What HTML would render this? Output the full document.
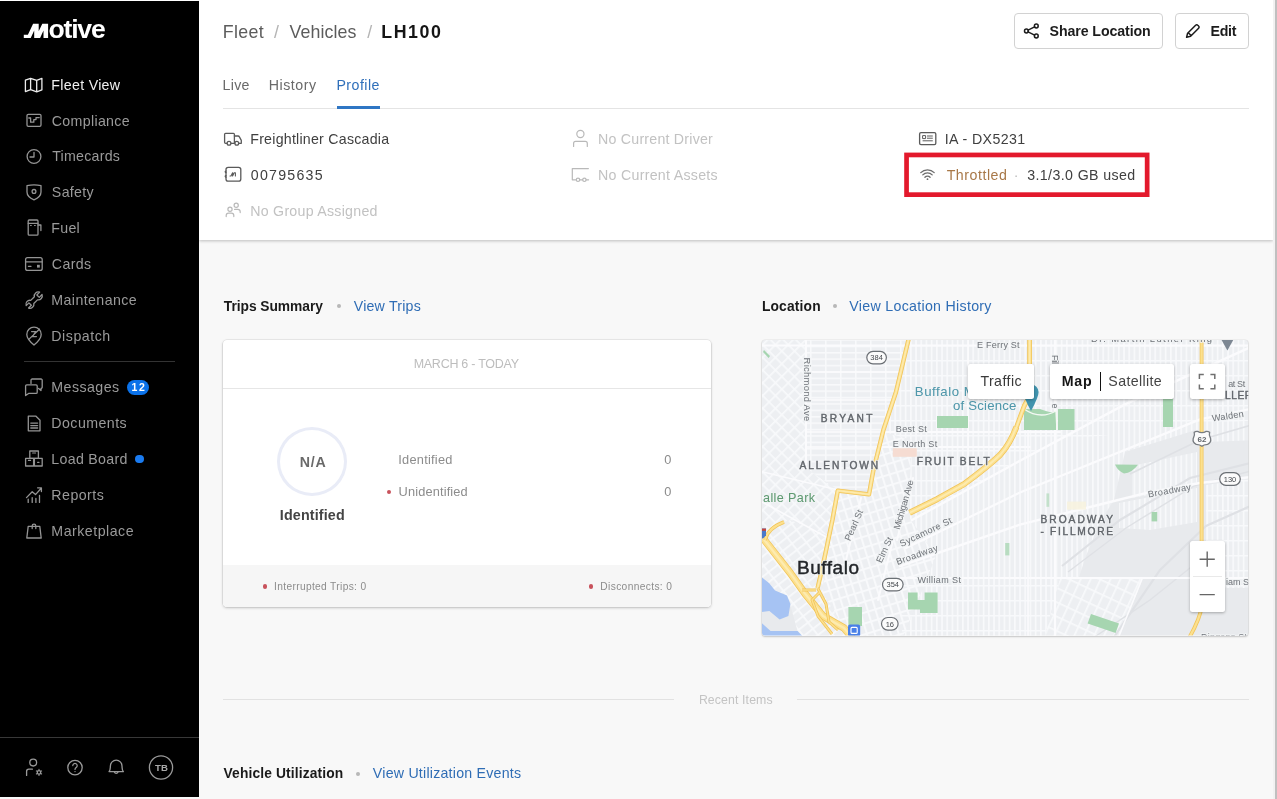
<!DOCTYPE html>
<html><head><meta charset="utf-8"><title>Motive - LH100</title>
<style>
html,body{margin:0;padding:0;}
body{width:1277px;height:799px;position:relative;overflow:hidden;background:#f8f8f8;font-family:"Liberation Sans",sans-serif;}
.t{position:absolute;white-space:nowrap;font-family:"Liberation Sans",sans-serif;}
.abs{position:absolute;}
svg{position:absolute;overflow:visible;}
#root{position:absolute;left:0;top:0;width:1277px;height:799px;overflow:hidden;will-change:transform;}

</style></head>
<body>
<div id="root">
<div class="abs" style="left:0;top:0;width:1277px;height:1px;background:#fff"></div>
<div class="abs" id="sb" style="left:0;top:1px;width:199px;height:796px;background:#000"></div>
<svg style="left:0;top:0" width="199" height="60"><path fill="#fff" d="M23.8 37.9 L23.8 34.7 L27.9 34.7 L33.1 23.7 L38.7 23.7 L38.7 31.2 L42.3 23.7 L48.1 23.7 L48.1 37.9 L43.5 37.9 L43.5 30.6 L40.1 37.9 L34.2 37.9 L34.2 30.6 L30.7 37.9 Z"/></svg>
<span class="t" id="logo" style="left:48.4px;top:16px;font-size:26.6px;line-height:26.6px;font-weight:700;color:#fff;letter-spacing:-1.18px">otive</span>
<span class="t" style="left:51.34px;top:78.00px;font-size:14.2px;line-height:14.2px;color:#f0f0f0;letter-spacing:0.304px;">Fleet View</span>
<span class="t" style="left:51.78px;top:114.00px;font-size:14.2px;line-height:14.2px;color:#9a9a9a;letter-spacing:0.330px;">Compliance</span>
<span class="t" style="left:52.18px;top:149.00px;font-size:14.2px;line-height:14.2px;color:#9a9a9a;letter-spacing:0.257px;">Timecards</span>
<span class="t" style="left:51.86px;top:185.00px;font-size:14.2px;line-height:14.2px;color:#9a9a9a;letter-spacing:0.323px;">Safety</span>
<span class="t" style="left:51.34px;top:221.00px;font-size:14.2px;line-height:14.2px;color:#9a9a9a;letter-spacing:0.264px;">Fuel</span>
<span class="t" style="left:51.78px;top:257.00px;font-size:14.2px;line-height:14.2px;color:#9a9a9a;letter-spacing:0.364px;">Cards</span>
<span class="t" style="left:51.34px;top:293.00px;font-size:14.2px;line-height:14.2px;color:#9a9a9a;letter-spacing:0.409px;">Maintenance</span>
<span class="t" style="left:51.34px;top:329.00px;font-size:14.2px;line-height:14.2px;color:#9a9a9a;letter-spacing:0.520px;">Dispatch</span>
<span class="t" style="left:51.34px;top:380.00px;font-size:14.2px;line-height:14.2px;color:#9a9a9a;letter-spacing:0.437px;">Messages</span>
<span class="t" style="left:51.34px;top:416.00px;font-size:14.2px;line-height:14.2px;color:#9a9a9a;letter-spacing:0.445px;">Documents</span>
<span class="t" style="left:51.34px;top:452.00px;font-size:14.2px;line-height:14.2px;color:#9a9a9a;letter-spacing:0.295px;">Load Board</span>
<span class="t" style="left:51.34px;top:488.00px;font-size:14.2px;line-height:14.2px;color:#9a9a9a;letter-spacing:0.460px;">Reports</span>
<span class="t" style="left:51.34px;top:524.00px;font-size:14.2px;line-height:14.2px;color:#9a9a9a;letter-spacing:0.495px;">Marketplace</span>
<div class="abs" style="left:24px;top:361px;width:151px;height:1px;background:#333"></div>
<div class="abs" style="left:0;top:737px;width:199px;height:1px;background:#383838"></div>
<div class="abs" style="left:127px;top:380px;width:22.4px;height:15px;border-radius:7.5px;background:#0b72ea"></div>
<span class="t" style="left:131.54px;top:382.00px;font-size:10.5px;line-height:10.5px;color:#fff;font-weight:700;letter-spacing:1.603px;">12</span>
<div class="abs" style="left:134.8px;top:454.6px;width:8.8px;height:8.8px;border-radius:50%;background:#1a7bf0"></div>
<svg style="left:0;top:0" width="199" height="799"><g fill="none" stroke="#ececec" stroke-width="1.3" stroke-linejoin="round" stroke-linecap="round"><path d="M25.4 80.2 L30.6 78.3 L36.7 80.4 L41.9 78.3 L41.9 89.8 L36.7 91.8 L30.6 89.7 L25.4 91.6 Z M30.6 78.3 V89.7 M36.7 80.4 V91.8"/></g><g fill="none" stroke="#949494" stroke-width="1.3" stroke-linejoin="round" stroke-linecap="round"><rect x="27" y="114.3" width="14" height="12" rx="1.3"/><path d="M28.8 118 h1.8 v4.2 h3.2 v-2.6 h2.2 v-2 h3.2"/></g><g fill="none" stroke="#949494" stroke-width="1.3" stroke-linejoin="round" stroke-linecap="round"><circle cx="34" cy="156.5" r="6.9"/><path d="M34 152.3 V157 H30"/></g><g fill="none" stroke="#949494" stroke-width="1.3" stroke-linejoin="round" stroke-linecap="round"><path d="M27 185.6 Q34 184.2 41 185.6 V192 Q41 197 34 199.8 Q27 197 27 192 Z"/><circle cx="34" cy="191.4" r="1.9"/></g><g fill="none" stroke="#949494" stroke-width="1.3" stroke-linejoin="round" stroke-linecap="round"><rect x="28.2" y="220" width="9.8" height="15.2" rx="1"/><path d="M28.2 223.3 H38 M38 225 H40.9 V230.5"/><path d="M30.5 225.5 h0.8 M34.5 225.5 h0.8" stroke-width="1"/></g><g fill="none" stroke="#949494" stroke-width="1.3" stroke-linejoin="round" stroke-linecap="round"><rect x="25.6" y="257.6" width="16.6" height="12.8" rx="2"/><path d="M25.6 261.9 H42.2 M28.4 266.3 H31"/><rect x="37" y="264.8" width="2.8" height="2.8" fill="#949494" stroke="none"/></g><g fill="none" stroke="#949494" stroke-width="1.3" stroke-linejoin="round" stroke-linecap="round"><g transform="translate(34.1 300.1) rotate(-45)"><path d="M-2.56 -2.2 H2.56 A4 4 0 0 1 9.53 -1.7 L5.6 -1.7 V1.7 L9.53 1.7 A4 4 0 0 1 2.56 2.2 H-2.56 A4 4 0 0 1 -9.53 1.7 L-5.6 1.7 V-1.7 L-9.53 -1.7 A4 4 0 0 1 -2.56 -2.2 Z"/></g></g><g fill="none" stroke="#949494" stroke-width="1.3" stroke-linejoin="round" stroke-linecap="round"><path d="M34 345 C30 341.6 26.8 338.6 26.8 334.4 a7.2 7.2 0 0 1 14.4 0 C41.2 338.6 38 341.6 34 345 Z"/><path d="M28.8 339.4 L39.4 329.2 M31.6 331.6 h4.2 l-3.4 5 h4"/></g><g fill="none" stroke="#949494" stroke-width="1.3" stroke-linejoin="round" stroke-linecap="round"><path d="M31 383.4 V380.2 a1.2 1.2 0 0 1 1.2 -1.2 H41 a1.2 1.2 0 0 1 1.2 1.2 V387.2 a1.2 1.2 0 0 1 -1.2 1.2 V390.6 L38.6 388.4"/><path d="M26.8 384.9 H36 a1.2 1.2 0 0 1 1.2 1.2 V392.2 a1.2 1.2 0 0 1 -1.2 1.2 H28.6 L25.6 395.6 V386.1 a1.2 1.2 0 0 1 1.2 -1.2 Z"/></g><g fill="none" stroke="#949494" stroke-width="1.3" stroke-linejoin="round" stroke-linecap="round"><path d="M28.3 416.2 H36 L40 420.2 V430.8 H28.3 Z"/><path d="M30.8 423.1 H37.6 M30.8 425.6 H37.6 M30.8 428 H37.6"/></g><g fill="none" stroke="#949494" stroke-width="1.3" stroke-linejoin="round" stroke-linecap="round"><rect x="29.8" y="451" width="8.6" height="7.4"/><rect x="25.6" y="458.4" width="8" height="7.6"/><rect x="34.4" y="458.4" width="7.8" height="7.6"/><path d="M32.6 453 h3 M28.4 460.4 h2.2 M37.6 462.4 h1.4" stroke-width="1.1"/></g><g fill="none" stroke="#949494" stroke-width="1.3" stroke-linejoin="round" stroke-linecap="round"><path d="M26.5 497.6 L32.2 491.8 L35.5 494.6 L41.2 488.2 M37.6 487.8 H41.4 V491.6"/><path d="M28.2 499.2 V502.4 M32.2 497.6 V502.4 M35.9 498.4 V502.4 M39.5 495.4 V502.4"/></g><g fill="none" stroke="#949494" stroke-width="1.3" stroke-linejoin="round" stroke-linecap="round"><path d="M28.2 526.4 H39.8 L41.2 538 H26.8 Z"/><path d="M32.2 528.6 V526 a1.8 1.8 0 0 1 3.6 0 V528.6"/></g><g fill="none" stroke="#9a9a9a" stroke-width="1.3" stroke-linejoin="round" stroke-linecap="round"><circle cx="33.2" cy="762.6" r="3.4"/><path d="M26.6 775.4 V771.4 a2.2 2.2 0 0 1 2.2 -2.2 H32.4"/><circle cx="39" cy="772.4" r="1.7"/><path d="M39 769.4 v0.8 M39 774.6 v0.8 M36.4 770.9 l0.7 0.4 M40.9 773.5 l0.7 0.4 M36.4 773.9 l0.7 -0.4 M40.9 771.3 l0.7 -0.4" stroke-width="1.1"/></g><g fill="none" stroke="#9a9a9a" stroke-width="1.3" stroke-linejoin="round" stroke-linecap="round"><circle cx="75" cy="767.6" r="7.2"/><path d="M72.8 765.6 a2.2 2.2 0 1 1 3.4 1.9 c-0.9 0.6 -1.2 1 -1.2 1.9" stroke-width="1.2"/><circle cx="75" cy="771.6" r="0.7" fill="#9a9a9a" stroke="none"/></g><g fill="none" stroke="#9a9a9a" stroke-width="1.3" stroke-linejoin="round" stroke-linecap="round"><path d="M109 771.6 C110.6 770 110.2 768 110.4 766 a5.8 5.8 0 0 1 11.6 0 C122.2 768 121.8 770 123.4 771.6 Z"/><path d="M114.4 772 a1.9 1.9 0 0 0 3.6 0"/></g><g fill="none" stroke="#9a9a9a" stroke-width="1.3" stroke-linejoin="round" stroke-linecap="round"><circle cx="161" cy="767.5" r="11.6"/></g></svg>
<span class="t" style="left:154.89px;top:763.00px;font-size:9.6px;line-height:9.6px;color:#a8a8a8;font-weight:700;letter-spacing:0.147px;">TB</span>
<div class="abs" style="left:199px;top:0;width:1074px;height:240px;background:#fff;box-shadow:0 1px 3px rgba(0,0,0,0.24)"></div>
<div class="abs" style="left:1273px;top:0;width:2px;height:799px;background:#f2f2f2"></div>
<div class="abs" style="left:1275px;top:0;width:2px;height:799px;background:#c0c0c0"></div>
<span class="t" style="left:222.74px;top:24.00px;font-size:17.8px;line-height:17.8px;color:#5c5c5c;letter-spacing:0.330px;">Fleet</span>
<span class="t" style="left:273.90px;top:24.00px;font-size:17.8px;line-height:17.8px;color:#b4b4b4;">/</span>
<span class="t" style="left:289.52px;top:24.00px;font-size:17.8px;line-height:17.8px;color:#5c5c5c;letter-spacing:0.092px;">Vehicles</span>
<span class="t" style="left:367.20px;top:24.00px;font-size:17.8px;line-height:17.8px;color:#b4b4b4;">/</span>
<span class="t" style="left:381.21px;top:24.00px;font-size:17.8px;line-height:17.8px;color:#151515;font-weight:700;letter-spacing:1.599px;">LH100</span>
<span class="t" style="left:222.44px;top:78.00px;font-size:14.2px;line-height:14.2px;color:#6a6a6a;letter-spacing:0.349px;">Live</span>
<span class="t" style="left:268.84px;top:78.00px;font-size:14.2px;line-height:14.2px;color:#6a6a6a;letter-spacing:0.502px;">History</span>
<span class="t" style="left:336.44px;top:78.00px;font-size:14.2px;line-height:14.2px;color:#2f6fba;letter-spacing:0.458px;">Profile</span>
<div class="abs" style="left:223px;top:107.5px;width:1026px;height:1px;background:#e4e4e4"></div>
<div class="abs" style="left:337px;top:106px;width:43px;height:2.5px;background:#2f76c4"></div>
<div class="abs" style="left:1014px;top:13px;width:146.5px;height:34px;border:1px solid #d2d2d2;border-radius:4px;background:#fff"></div>
<div class="abs" style="left:1175px;top:13px;width:72px;height:34px;border:1px solid #d2d2d2;border-radius:4px;background:#fff"></div>
<span class="t" style="left:1049.59px;top:24.00px;font-size:14.2px;line-height:14.2px;color:#1c1c1c;font-weight:700;letter-spacing:-0.099px;">Share Location</span>
<span class="t" style="left:1210.45px;top:24.00px;font-size:14.2px;line-height:14.2px;color:#1c1c1c;font-weight:700;letter-spacing:-0.232px;">Edit</span>
<svg style="left:0;top:0" width="1277" height="250"><g fill="none" stroke="#1c1c1c" stroke-width="1.5" stroke-linejoin="round" stroke-linecap="round"><circle cx="1036.3" cy="26" r="1.9" fill="#fff"/><circle cx="1026.4" cy="31" r="1.9" fill="#fff"/><circle cx="1036.3" cy="36" r="1.9" fill="#fff"/><path d="M1028.1 30.1 L1034.6 26.9 M1028.1 31.9 L1034.6 35.1"/></g><g fill="none" stroke="#1c1c1c" stroke-width="1.5" stroke-linejoin="round" stroke-linecap="round"><path d="M1186.6 37.2 L1187.6 33.2 L1195.6 25.2 a1.5 1.5 0 0 1 2.2 0 l0.8 0.8 a1.5 1.5 0 0 1 0 2.2 L1190.6 36.2 Z M1188.3 32.7 L1191.1 35.5" /></g><g fill="none" stroke="#5a5a5a" stroke-width="1.3" stroke-linejoin="round" stroke-linecap="round"><path d="M226.9 143.3 H225.6 a1 1 0 0 1 -1 -1 V134.3 a1 1 0 0 1 1 -1 H233.4 a1 1 0 0 1 1 1 V143.3 H231.2"/><path d="M234.4 136 H238 a1.6 1.6 0 0 1 1.4 0.9 L241.3 140.4 V143.3 H238.9 M234.6 143.3 h0"/><circle cx="229" cy="143.3" r="1.9"/><circle cx="236.8" cy="143.3" r="1.9"/></g><g fill="none" stroke="#5a5a5a" stroke-width="1.3" stroke-linejoin="round" stroke-linecap="round"><rect x="226" y="167.4" width="14.8" height="13.8" rx="2.2"/><path d="M226 171 q-1.6 0.6 0 1.6 M226 175.6 q-1.6 0.6 0 1.6"/><path d="M230 176 h1 l1.6 -3.2 v3.2 l1.6 -3.2 h1.2 v3.2" stroke-width="1.1"/></g><g fill="none" stroke="#b9b9b9" stroke-width="1.2" stroke-linejoin="round" stroke-linecap="round"><circle cx="230" cy="209.2" r="2.1"/><path d="M226.2 216.6 V215.6 a2.4 2.4 0 0 1 2.4 -2.4 h2.8 a2.4 2.4 0 0 1 2.4 2.4 V216.6"/><circle cx="236.2" cy="205.3" r="2.1"/><path d="M234.6 209.4 h3.2 a2.4 2.4 0 0 1 2.4 2.4 V212.6"/></g><g fill="none" stroke="#b9b9b9" stroke-width="1.2" stroke-linejoin="round" stroke-linecap="round"><circle cx="580.4" cy="134" r="3.6"/><path d="M573.6 146.4 V143.4 a2 2 0 0 1 2 -2 H585.3 a2 2 0 0 1 2 2 V146.4"/></g><g fill="none" stroke="#b9b9b9" stroke-width="1.2" stroke-linejoin="round" stroke-linecap="round"><path d="M588.4 168.6 H572.3 V179.8 H576.2 M579.8 179.8 H582.6 M586.2 179.8 H588.6"/><circle cx="578" cy="179.8" r="1.7"/><circle cx="584.4" cy="179.8" r="1.7"/></g><g fill="none" stroke="#5a5a5a" stroke-width="1.3" stroke-linejoin="round" stroke-linecap="round"><rect x="919.6" y="132.6" width="16.2" height="12" rx="1.4"/><path d="M927.4 136 H932.4 M927.4 138.2 H932.4 M923 140.8 H932.4" stroke-width="1"/><rect x="923" y="135.6" width="2.6" height="3" stroke-width="1"/></g><g fill="none" stroke="#6c6c6c" stroke-width="1.3" stroke-linejoin="round" stroke-linecap="round"><path d="M920.8 172.6 a9.4 9.4 0 0 1 13.4 0 M922.8 174.9 a6.5 6.5 0 0 1 9.4 0 M924.9 177.2 a3.6 3.6 0 0 1 5.2 0"/><circle cx="927.5" cy="179.2" r="0.9" fill="#6c6c6c" stroke="none"/></g></svg>
<span class="t" style="left:250.24px;top:132.00px;font-size:14.2px;line-height:14.2px;color:#404040;letter-spacing:0.240px;">Freightliner Cascadia</span>
<span class="t" style="left:250.85px;top:168.00px;font-size:14.2px;line-height:14.2px;color:#404040;letter-spacing:1.225px;">00795635</span>
<span class="t" style="left:250.24px;top:204.00px;font-size:14.2px;line-height:14.2px;color:#c2c2c2;letter-spacing:0.260px;">No Group Assigned</span>
<span class="t" style="left:598.04px;top:132.00px;font-size:14.2px;line-height:14.2px;color:#c2c2c2;letter-spacing:0.228px;">No Current Driver</span>
<span class="t" style="left:598.04px;top:168.00px;font-size:14.2px;line-height:14.2px;color:#c2c2c2;letter-spacing:0.279px;">No Current Assets</span>
<span class="t" style="left:944.69px;top:132.00px;font-size:14.2px;line-height:14.2px;color:#404040;letter-spacing:0.395px;">IA - DX5231</span>
<span class="t" style="left:946.68px;top:168.00px;font-size:14.2px;line-height:14.2px;color:#a87848;letter-spacing:0.525px;">Throttled</span>
<span class="t" style="left:1013.82px;top:168.00px;font-size:14.2px;line-height:14.2px;color:#bbb;">·</span>
<span class="t" style="left:1027.26px;top:168.00px;font-size:14.2px;line-height:14.2px;color:#404040;letter-spacing:0.381px;">3.1/3.0 GB used</span>
<svg style="left:0;top:0" width="1277" height="250"><rect x="906.55" y="154.95" width="240.6" height="39.7" fill="none" stroke="#e3192c" stroke-width="4.7"/></svg>
<span class="t" style="left:223.85px;top:300.00px;font-size:13.8px;line-height:13.8px;color:#1a1a1a;font-weight:700;letter-spacing:-0.053px;">Trips Summary</span>
<div class="abs" style="left:336.6px;top:304px;width:4px;height:4px;border-radius:50%;background:#b8b8b8"></div>
<span class="t" style="left:353.74px;top:299.00px;font-size:14.2px;line-height:14.2px;color:#2f6db5;letter-spacing:0.211px;">View Trips</span>
<span class="t" style="left:761.88px;top:300.00px;font-size:13.8px;line-height:13.8px;color:#1a1a1a;font-weight:700;letter-spacing:0.183px;">Location</span>
<div class="abs" style="left:832.6px;top:304px;width:4px;height:4px;border-radius:50%;background:#b8b8b8"></div>
<span class="t" style="left:849.34px;top:299.00px;font-size:14.2px;line-height:14.2px;color:#2f6db5;letter-spacing:0.298px;">View Location History</span>
<div class="abs" style="left:223px;top:340px;width:488px;height:267px;background:#fff;border-radius:4px;box-shadow:0 0 0 0.6px rgba(0,0,0,0.10),0 1px 3px rgba(0,0,0,0.20)"></div>
<div class="abs" style="left:223px;top:387.5px;width:488px;height:1px;background:#e6e6e6"></div>
<div class="abs" style="left:223px;top:564.5px;width:488px;height:42.5px;background:#f6f6f6;border-radius:0 0 4px 4px"></div>
<span class="t" style="left:413.67px;top:358.00px;font-size:12.5px;line-height:12.5px;color:#bdbdbd;letter-spacing:-0.266px;">MARCH 6 - TODAY</span>
<div class="abs" style="left:277.3px;top:426.6px;width:63.8px;height:63px;border:3px solid #e9ecf7;border-radius:50%"></div>
<span class="t" style="left:299.65px;top:455.00px;font-size:14.2px;line-height:14.2px;color:#6a6a6a;font-weight:700;letter-spacing:0.835px;">N/A</span>
<span class="t" style="left:279.84px;top:508.00px;font-size:14.3px;line-height:14.3px;color:#444;font-weight:700;letter-spacing:0.138px;">Identified</span>
<span class="t" style="left:398.22px;top:454.00px;font-size:12.8px;line-height:12.8px;color:#8c8c8c;letter-spacing:0.251px;">Identified</span>
<span class="t" style="left:398.61px;top:486.00px;font-size:12.8px;line-height:12.8px;color:#8c8c8c;letter-spacing:0.137px;">Unidentified</span>
<span class="t" style="left:664.30px;top:454.00px;font-size:12.8px;line-height:12.8px;color:#8c8c8c;">0</span>
<span class="t" style="left:664.30px;top:486.00px;font-size:12.8px;line-height:12.8px;color:#8c8c8c;">0</span>
<div class="abs" style="left:386.9px;top:489.7px;width:4.3px;height:4.3px;border-radius:50%;background:#c8525c"></div>
<div class="abs" style="left:262.5px;top:584.3px;width:4.4px;height:4.4px;border-radius:50%;background:#c8525c"></div>
<div class="abs" style="left:588.5px;top:584.3px;width:4.4px;height:4.4px;border-radius:50%;background:#c8525c"></div>
<span class="t" style="left:274.06px;top:582.00px;font-size:10.2px;line-height:10.2px;color:#8c8c8c;letter-spacing:0.346px;">Interrupted Trips: 0</span>
<span class="t" style="left:600.36px;top:582.00px;font-size:10.2px;line-height:10.2px;color:#8c8c8c;letter-spacing:0.364px;">Disconnects: 0</span>
<div class="abs" style="left:223px;top:699px;width:451px;height:1px;background:#e2e2e2"></div>
<div class="abs" style="left:797.3px;top:699px;width:451.7px;height:1px;background:#e2e2e2"></div>
<span class="t" style="left:698.89px;top:694.00px;font-size:12.3px;line-height:12.3px;color:#c4c4c4;letter-spacing:0.118px;">Recent Items</span>
<span class="t" style="left:223.51px;top:767.00px;font-size:13.8px;line-height:13.8px;color:#1a1a1a;font-weight:700;letter-spacing:0.131px;">Vehicle Utilization</span>
<div class="abs" style="left:356.2px;top:771.6px;width:4px;height:4px;border-radius:50%;background:#b8b8b8"></div>
<span class="t" style="left:372.84px;top:766.00px;font-size:14.2px;line-height:14.2px;color:#2f6db5;letter-spacing:0.225px;">View Utilization Events</span>
<svg id="map" style="left:0;top:0" width="1277" height="799"><defs><clipPath id="mc"><rect x="762" y="340" width="486.3" height="295.6" rx="3"/></clipPath>
<pattern id="pe" width="5.2" height="24" patternUnits="userSpaceOnUse"><rect width="5.2" height="24" fill="#edeff2"/><rect x="0" y="0" width="1.7" height="24" fill="#f8f9fb"/></pattern>
<pattern id="peh" width="5.2" height="15" patternUnits="userSpaceOnUse"><rect x="0" y="0" width="5.2" height="1.5" fill="#f8f9fb"/></pattern>
<pattern id="pnw" width="15" height="6.4" patternUnits="userSpaceOnUse"><rect width="15" height="6.4" fill="#edeff2"/><rect x="0" y="0" width="15" height="1.6" fill="#f8f9fb"/><rect x="0" y="0" width="1.6" height="6.4" fill="#f8f9fb"/></pattern>
<pattern id="pd" width="9" height="9" patternUnits="userSpaceOnUse" patternTransform="rotate(45 762 340)"><rect width="9" height="9" fill="#edeff2"/><rect x="0" y="0" width="1.7" height="9" fill="#f8f9fb"/><rect x="0" y="0" width="9" height="1.7" fill="#f8f9fb"/></pattern>
<pattern id="pdt" width="7.6" height="10.4" patternUnits="userSpaceOnUse" patternTransform="rotate(-17 850 560)"><rect width="7.6" height="10.4" fill="#edeff2"/><rect x="0" y="0" width="2" height="10.4" fill="#f8f9fb"/><rect x="0" y="0" width="7.6" height="2" fill="#f8f9fb"/></pattern>
<pattern id="pwf" width="8" height="12" patternUnits="userSpaceOnUse" patternTransform="rotate(52 790 572)"><rect width="8" height="12" fill="#edeff2"/><rect x="0" y="0" width="1.8" height="12" fill="#f8f9fb"/><rect x="0" y="0" width="8" height="1.8" fill="#f8f9fb"/></pattern>
<pattern id="plr" width="9" height="13" patternUnits="userSpaceOnUse" patternTransform="rotate(25 1080 600)"><rect width="9" height="13" fill="#edeff2"/><rect x="0" y="0" width="1.7" height="13" fill="#f8f9fb"/><rect x="0" y="0" width="9" height="1.7" fill="#f8f9fb"/></pattern>
<pattern id="pfb" width="6" height="11" patternUnits="userSpaceOnUse" patternTransform="rotate(-3 900 450)"><rect width="6" height="11" fill="#edeff2"/><rect x="0" y="0" width="1.8" height="11" fill="#f8f9fb"/><rect x="0" y="0" width="6" height="1.6" fill="#f8f9fb"/></pattern>
<filter id="mb" x="-2%" y="-2%" width="104%" height="104%"><feGaussianBlur stdDeviation="0.55"/></filter></defs>
<g clip-path="url(#mc)"><g filter="url(#mb)">
<rect x="755" y="335" width="500" height="306" fill="#e8eaed"/>
<polygon points="755,335 806,335 806,468 838,490 828,536 790,520 755,536" fill="url(#pd)"/>
<polygon points="806,335 909,335 884,430 872,490 838,490 806,468" fill="url(#pnw)"/>
<polygon points="838,491 870,495 884,432 912,440 908,516 936,556 902,640 852,640 822,592 830,536" fill="url(#pdt)"/>
<polygon points="755,536 790,520 830,536 822,592 852,640 800,640 790,604 775,590 762,577 755,572" fill="url(#pwf)"/>
<polygon points="909,335 1255,335 1255,440 1205,442 1196,430 1125,452 1114,500 1100,522 1086,556 1078,580 1000,580 1000,640 902,640 936,556 908,516 912,440 884,432" fill="url(#pe)"/>
<polygon points="909,335 1255,335 1255,420 1060,440 1000,470 912,520 908,516 912,440 884,432" fill="url(#peh)"/>
<polygon points="1132,466 1197,452 1197,486 1132,498" fill="url(#pe)"/>
<polygon points="1119,503 1197,488 1197,522 1150,530 1119,528" fill="url(#pe)"/>
<polygon points="1206,485 1255,478 1255,588 1206,588" fill="url(#pe)"/>
<polygon points="1206,485 1255,478 1255,588 1206,588" fill="url(#peh)"/>
<polygon points="1000,578 1060,578 1044,640 1000,640" fill="url(#pe)"/>
<polygon points="1000,578 1060,578 1044,640 1000,640" fill="url(#peh)"/>
<polygon points="1060,578 1143,578 1118,640 1044,640" fill="url(#plr)"/>
<polygon points="902,579 1000,579 1000,640 902,640" fill="url(#peh)"/>
<path d="M1062 566 L1120 520 L1190 478 L1255 462" stroke="#dfe1e5" stroke-width="2.2" fill="none"/>
<path d="M1068 572 L1126 528 L1194 486 L1255 470" stroke="#dfe1e5" stroke-width="1.4" fill="none"/>
<path d="M1112 640 L1160 570 L1206 526 L1255 504" stroke="#dfe1e5" stroke-width="2.2" fill="none"/>
<path d="M1130 474 L1200 440 L1255 424" stroke="#dfe1e5" stroke-width="1.6" fill="none"/>
<path d="M1090 640 L1150 600 L1200 560" stroke="#dfe1e5" stroke-width="1.4" fill="none"/>
<path d="M755 345.5 H1255" stroke="#fbfbfd" stroke-width="1.8" fill="none" stroke-linecap="round"/>
<path d="M884 432 H1060" stroke="#fbfbfd" stroke-width="2" fill="none" stroke-linecap="round"/>
<path d="M880 447 H1030" stroke="#fbfbfd" stroke-width="1.8" fill="none" stroke-linecap="round"/>
<path d="M806 335 V468" stroke="#fbfbfd" stroke-width="2" fill="none" stroke-linecap="round"/>
<path d="M900 578 H1255" stroke="#fbfbfd" stroke-width="2.2" fill="none" stroke-linecap="round"/>
<path d="M1055 335 V640" stroke="#fbfbfd" stroke-width="2.2" fill="none" stroke-linecap="round"/>
<path d="M1028 430 V640" stroke="#fbfbfd" stroke-width="1.6" fill="none" stroke-linecap="round"/>
<path d="M968 335 V520" stroke="#fbfbfd" stroke-width="1.6" fill="none" stroke-linecap="round"/>
<path d="M912 520 L1020 460.8 L1125 404.4 L1255 345" stroke="#fbfbfd" stroke-width="2.4" fill="none" stroke-linecap="round"/>
<path d="M906 548 L1020 492.6 L1200 419.4 L1255 408" stroke="#fbfbfd" stroke-width="2.2" fill="none" stroke-linecap="round"/>
<path d="M900 566 L1020 524.6 L1110 502 L1147.6 492.6 L1198.4 483.2 L1255 476.6" stroke="#fbfbfd" stroke-width="2.4" fill="none" stroke-linecap="round"/>
<path d="M806 432 H884" stroke="#fbfbfd" stroke-width="1.6" fill="none" stroke-linecap="round"/>
<path d="M806 447 H880" stroke="#fbfbfd" stroke-width="1.4" fill="none" stroke-linecap="round"/>
<path d="M806 400 H892" stroke="#fbfbfd" stroke-width="1.4" fill="none" stroke-linecap="round"/>
<path d="M806 372 H900" stroke="#fbfbfd" stroke-width="1.4" fill="none" stroke-linecap="round"/>
<path d="M755 470 L838 490" stroke="#fbfbfd" stroke-width="1.6" fill="none" stroke-linecap="round"/>
<path d="M755 498 L828 538" stroke="#fbfbfd" stroke-width="1.6" fill="none" stroke-linecap="round"/>
<path d="M1119 636 L1142 579" stroke="#fbfbfd" stroke-width="1.6" fill="none" stroke-linecap="round"/>
<path d="M861 498 L846 560" stroke="#fbfbfd" stroke-width="2" fill="none" stroke-linecap="round"/>
<path d="M893 540 L878 600" stroke="#fbfbfd" stroke-width="2" fill="none" stroke-linecap="round"/>
<path d="M913 478 L897 540" stroke="#fbfbfd" stroke-width="2" fill="none" stroke-linecap="round"/>
<rect x="937" y="416" width="31" height="12" fill="#a6d5b0"/>
<path d="M1024 409 L1040 409 Q1052 414 1056 411 L1056 430 L1024 430 Z" fill="#a6d5b0"/>
<rect x="1058" y="409" width="16.5" height="21" fill="#a6d5b0"/>
<rect x="1163" y="396" width="10" height="31" fill="#a6d5b0"/>
<path d="M1115 464.4 L1138 464.8 Q1132 473 1124 473.4 Q1118 471 1115 464.4 Z" fill="#a6d5b0"/>
<rect x="1151.6" y="512" width="5.6" height="9.4" fill="#a6d5b0"/>
<rect x="1005.2" y="543" width="4.2" height="12.4" fill="#a6d5b0" opacity="0.75"/>
<rect x="1046.4" y="493.4" width="2.8" height="13.4" fill="#a6d5b0" opacity="0.6"/>
<path d="M908 592.4 L917.6 592.4 L917.6 600 L924.6 600 L924.6 592.4 L937.6 592.4 L937.6 613 L920 613 L920 609.6 L908 609.6 Z" fill="#a6d5b0"/>
<rect x="848.4" y="607" width="13.6" height="19" fill="#a6d5b0"/>
<polygon points="1091,614 1119,623.4 1115.6,633 1087.6,623.6" fill="#a6d5b0"/>
<polygon points="764,350 770,356 768.6,358 763,352" fill="#a6d5b0"/>
<rect x="1067" y="501.6" width="19" height="8" fill="#f7f3dc" opacity="0.8"/>
<rect x="892.8" y="448.2" width="24" height="8.6" fill="#f6dcd2"/>
<path d="M1024 409 Q1040 420 1056 411 M1056 411 L1057 430" stroke="#f4f8f4" stroke-width="1.4" fill="none"/>
<path d="M755 572 L769 583 L775 590.6 L787 595.4 L790.4 604 L788.4 616 L779.6 619.4 L769.4 611 L755 613 Z" fill="#a6c3f3"/>
<path d="M755 617 L770.6 631 L797.6 631 L806 640 L755 640 Z" fill="#a6c3f3"/>
<path d="M755 528 L790 572.6 L805 593.6 L823 616 L844 628 L854 640" stroke="#f1c458" stroke-width="7.4" fill="none" stroke-linejoin="round"/>
<path d="M755 528 L790 572.6 L805 593.6 L823 616 L844 628 L854 640" stroke="#fce08e" stroke-width="5.9" fill="none" stroke-linejoin="round"/>
<path d="M755 528 L790 572.6 L805 593.6 L823 616 L844 628 L854 640" stroke="#fdebb0" stroke-width="2.22" fill="none" stroke-linejoin="round"/>
<path d="M765 540 Q768 528 784 522" stroke="#f1c458" stroke-width="3.6" fill="none" stroke-linejoin="round"/>
<path d="M765 540 Q768 528 784 522" stroke="#fce08e" stroke-width="2.1" fill="none" stroke-linejoin="round"/>
<path d="M909.6 335 L896 392 L883.4 430 L873.4 470 L869 494.4 L837.8 490.6 L832.4 520 L823 565 L817.6 588" stroke="#f1c458" stroke-width="4.4" fill="none" stroke-linejoin="round"/>
<path d="M909.6 335 L896 392 L883.4 430 L873.4 470 L869 494.4 L837.8 490.6 L832.4 520 L823 565 L817.6 588" stroke="#fce08e" stroke-width="2.9000000000000004" fill="none" stroke-linejoin="round"/>
<path d="M909.6 335 L896 392 L883.4 430 L873.4 470 L869 494.4 L837.8 490.6 L832.4 520 L823 565 L817.6 588" stroke="#fdebb0" stroke-width="1.32" fill="none" stroke-linejoin="round"/>
<path d="M802 590 H816 M817.6 588 L826 604 L829 622 L838 630 M820 592 L812 600 L818 616 L832 634" stroke="#f1c458" stroke-width="3" fill="none" stroke-linejoin="round"/>
<path d="M802 590 H816 M817.6 588 L826 604 L829 622 L838 630 M820 592 L812 600 L818 616 L832 634" stroke="#fce08e" stroke-width="1.5" fill="none" stroke-linejoin="round"/>
<path d="M1029.6 335 L1029.6 396 L1024.2 406 L1015.4 430 Q1010 444 1000 455" stroke="#f1c458" stroke-width="4.8" fill="none" stroke-linejoin="round"/>
<path d="M1029.6 335 L1029.6 396 L1024.2 406 L1015.4 430 Q1010 444 1000 455" stroke="#fce08e" stroke-width="3.3" fill="none" stroke-linejoin="round"/>
<path d="M1029.6 335 L1029.6 396 L1024.2 406 L1015.4 430 Q1010 444 1000 455" stroke="#fdebb0" stroke-width="1.44" fill="none" stroke-linejoin="round"/>
<path d="M1016.4 427 Q1010 444 1000 455 Q988 466.4 964 484.2 L937 499.2 L909.6 512.8" stroke="#f1c458" stroke-width="6" fill="none" stroke-linejoin="round"/>
<path d="M1016.4 427 Q1010 444 1000 455 Q988 466.4 964 484.2 L937 499.2 L909.6 512.8" stroke="#fce08e" stroke-width="4.5" fill="none" stroke-linejoin="round"/>
<path d="M1016.4 427 Q1010 444 1000 455 Q988 466.4 964 484.2 L937 499.2 L909.6 512.8" stroke="#fdebb0" stroke-width="1.8" fill="none" stroke-linejoin="round"/>
<path d="M1201.6 335 V606 Q1200.6 618 1188 640" stroke="#f1c458" stroke-width="3.8" fill="none" stroke-linejoin="round"/>
<path d="M1201.6 335 V606 Q1200.6 618 1188 640" stroke="#fce08e" stroke-width="2.3" fill="none" stroke-linejoin="round"/>
</g>
</g></svg>
<div class="abs" style="left:762px;top:340px;width:486.3px;height:295.6px;border-radius:3px;box-shadow:0 0 0 0.6px rgba(0,0,0,0.08),0 1px 2px rgba(0,0,0,0.18)"></div>
<svg id="maplab" style="left:0;top:0" width="1277" height="799"><g clip-path="url(#mc)"><g filter="url(#lb)"><text x="820.8" y="422.2" font-family="Liberation Sans, sans-serif" font-size="10.2" fill="#62666c" textLength="51.6" lengthAdjust="spacing" stroke="#f1f3f4" stroke-width="2.2" stroke-linejoin="round" stroke-opacity="0.85">BRYANT</text>
<text x="820.8" y="422.2" font-family="Liberation Sans, sans-serif" font-size="10.2" fill="#62666c" textLength="51.6" lengthAdjust="spacing" stroke="#62666c" stroke-width="0.4">BRYANT</text>
<text x="799.4" y="469.2" font-family="Liberation Sans, sans-serif" font-size="10.2" fill="#62666c" textLength="78.8" lengthAdjust="spacing" stroke="#f1f3f4" stroke-width="2.2" stroke-linejoin="round" stroke-opacity="0.85">ALLENTOWN</text>
<text x="799.4" y="469.2" font-family="Liberation Sans, sans-serif" font-size="10.2" fill="#62666c" textLength="78.8" lengthAdjust="spacing" stroke="#62666c" stroke-width="0.4">ALLENTOWN</text>
<text x="916.8" y="465.3" font-family="Liberation Sans, sans-serif" font-size="10.2" fill="#62666c" textLength="73" lengthAdjust="spacing" stroke="#f1f3f4" stroke-width="2.2" stroke-linejoin="round" stroke-opacity="0.85">FRUIT BELT</text>
<text x="916.8" y="465.3" font-family="Liberation Sans, sans-serif" font-size="10.2" fill="#62666c" textLength="73" lengthAdjust="spacing" stroke="#62666c" stroke-width="0.4">FRUIT BELT</text>
<text x="1040.4" y="523" font-family="Liberation Sans, sans-serif" font-size="10.2" fill="#62666c" textLength="72.6" lengthAdjust="spacing" stroke="#f1f3f4" stroke-width="2.2" stroke-linejoin="round" stroke-opacity="0.85">BROADWAY</text>
<text x="1040.4" y="523" font-family="Liberation Sans, sans-serif" font-size="10.2" fill="#62666c" textLength="72.6" lengthAdjust="spacing" stroke="#62666c" stroke-width="0.4">BROADWAY</text>
<text x="1040.4" y="535.3" font-family="Liberation Sans, sans-serif" font-size="10.2" fill="#62666c" textLength="72.6" lengthAdjust="spacing" stroke="#f1f3f4" stroke-width="2.2" stroke-linejoin="round" stroke-opacity="0.85">- FILLMORE</text>
<text x="1040.4" y="535.3" font-family="Liberation Sans, sans-serif" font-size="10.2" fill="#62666c" textLength="72.6" lengthAdjust="spacing" stroke="#62666c" stroke-width="0.4">- FILLMORE</text>
<text x="797" y="574.3" font-family="Liberation Sans, sans-serif" font-size="19" fill="#25282c" textLength="62" lengthAdjust="spacing" stroke="#f1f3f4" stroke-width="2.2" stroke-linejoin="round" stroke-opacity="0.85">Buffalo</text>
<text x="797" y="574.3" font-family="Liberation Sans, sans-serif" font-size="19" fill="#25282c" textLength="62" lengthAdjust="spacing" stroke="#25282c" stroke-width="0.4">Buffalo</text>
<text x="763" y="501.6" font-family="Liberation Sans, sans-serif" font-size="12.6" fill="#5f9a72" textLength="52" lengthAdjust="spacing" stroke="#f1f3f4" stroke-width="2.2" stroke-linejoin="round" stroke-opacity="0.85">alle Park</text>
<text x="763" y="501.6" font-family="Liberation Sans, sans-serif" font-size="12.6" fill="#5f9a72" textLength="52" lengthAdjust="spacing">alle Park</text>
<text x="914.8" y="396.3" font-family="Liberation Sans, sans-serif" font-size="13.2" fill="#4f97ab" textLength="60" lengthAdjust="spacing" stroke="#f1f3f4" stroke-width="2.2" stroke-linejoin="round" stroke-opacity="0.85">Buffalo M</text>
<text x="914.8" y="396.3" font-family="Liberation Sans, sans-serif" font-size="13.2" fill="#4f97ab" textLength="60" lengthAdjust="spacing">Buffalo M</text>
<text x="953" y="409.6" font-family="Liberation Sans, sans-serif" font-size="13.2" fill="#4f97ab" textLength="63.4" lengthAdjust="spacing" stroke="#f1f3f4" stroke-width="2.2" stroke-linejoin="round" stroke-opacity="0.85">of Science</text>
<text x="953" y="409.6" font-family="Liberation Sans, sans-serif" font-size="13.2" fill="#4f97ab" textLength="63.4" lengthAdjust="spacing">of Science</text>
<text x="895.8" y="432" font-family="Liberation Sans, sans-serif" font-size="9" fill="#73777d" textLength="31" lengthAdjust="spacing" stroke="#f1f3f4" stroke-width="2.2" stroke-linejoin="round" stroke-opacity="0.85">Best St</text>
<text x="895.8" y="432" font-family="Liberation Sans, sans-serif" font-size="9" fill="#73777d" textLength="31" lengthAdjust="spacing">Best St</text>
<text x="892.8" y="446.8" font-family="Liberation Sans, sans-serif" font-size="9" fill="#73777d" textLength="44.4" lengthAdjust="spacing" stroke="#f1f3f4" stroke-width="2.2" stroke-linejoin="round" stroke-opacity="0.85">E North St</text>
<text x="892.8" y="446.8" font-family="Liberation Sans, sans-serif" font-size="9" fill="#73777d" textLength="44.4" lengthAdjust="spacing">E North St</text>
<text x="917.4" y="583.2" font-family="Liberation Sans, sans-serif" font-size="9" fill="#73777d" textLength="43.6" lengthAdjust="spacing" stroke="#f1f3f4" stroke-width="2.2" stroke-linejoin="round" stroke-opacity="0.85">William St</text>
<text x="917.4" y="583.2" font-family="Liberation Sans, sans-serif" font-size="9" fill="#73777d" textLength="43.6" lengthAdjust="spacing">William St</text>
<text x="977" y="348.4" font-family="Liberation Sans, sans-serif" font-size="9" fill="#73777d" textLength="42.6" lengthAdjust="spacing" stroke="#f1f3f4" stroke-width="2.2" stroke-linejoin="round" stroke-opacity="0.85">E Ferry St</text>
<text x="977" y="348.4" font-family="Liberation Sans, sans-serif" font-size="9" fill="#73777d" textLength="42.6" lengthAdjust="spacing">E Ferry St</text>
<text x="804.4" y="357.6" font-family="Liberation Sans, sans-serif" font-size="9.4" fill="#73777d" textLength="63.6" lengthAdjust="spacing" transform="rotate(90 804.4 357.6)" stroke="#f1f3f4" stroke-width="2.2" stroke-linejoin="round" stroke-opacity="0.85">Richmond Ave</text>
<text x="804.4" y="357.6" font-family="Liberation Sans, sans-serif" font-size="9.4" fill="#73777d" textLength="63.6" lengthAdjust="spacing" transform="rotate(90 804.4 357.6)">Richmond Ave</text>
<text x="899.6" y="530" font-family="Liberation Sans, sans-serif" font-size="9.2" fill="#73777d" textLength="51" lengthAdjust="spacing" transform="rotate(-74 899.6 530)" stroke="#f1f3f4" stroke-width="2.2" stroke-linejoin="round" stroke-opacity="0.85">Michigan Ave</text>
<text x="899.6" y="530" font-family="Liberation Sans, sans-serif" font-size="9.2" fill="#73777d" textLength="51" lengthAdjust="spacing" transform="rotate(-74 899.6 530)">Michigan Ave</text>
<text x="850" y="541.6" font-family="Liberation Sans, sans-serif" font-size="9.2" fill="#73777d" textLength="33" lengthAdjust="spacing" transform="rotate(-66 850 541.6)" stroke="#f1f3f4" stroke-width="2.2" stroke-linejoin="round" stroke-opacity="0.85">Pearl St</text>
<text x="850" y="541.6" font-family="Liberation Sans, sans-serif" font-size="9.2" fill="#73777d" textLength="33" lengthAdjust="spacing" transform="rotate(-66 850 541.6)">Pearl St</text>
<text x="881.6" y="563.4" font-family="Liberation Sans, sans-serif" font-size="9.2" fill="#73777d" textLength="27" lengthAdjust="spacing" transform="rotate(-65 881.6 563.4)" stroke="#f1f3f4" stroke-width="2.2" stroke-linejoin="round" stroke-opacity="0.85">Elm St</text>
<text x="881.6" y="563.4" font-family="Liberation Sans, sans-serif" font-size="9.2" fill="#73777d" textLength="27" lengthAdjust="spacing" transform="rotate(-65 881.6 563.4)">Elm St</text>
<text x="901.6" y="547" font-family="Liberation Sans, sans-serif" font-size="9.2" fill="#73777d" textLength="56.6" lengthAdjust="spacing" transform="rotate(-25.6 901.6 547)" stroke="#f1f3f4" stroke-width="2.2" stroke-linejoin="round" stroke-opacity="0.85">Sycamore St</text>
<text x="901.6" y="547" font-family="Liberation Sans, sans-serif" font-size="9.2" fill="#73777d" textLength="56.6" lengthAdjust="spacing" transform="rotate(-25.6 901.6 547)">Sycamore St</text>
<text x="897.4" y="565" font-family="Liberation Sans, sans-serif" font-size="9.2" fill="#73777d" textLength="43.6" lengthAdjust="spacing" transform="rotate(-19.6 897.4 565)" stroke="#f1f3f4" stroke-width="2.2" stroke-linejoin="round" stroke-opacity="0.85">Broadway</text>
<text x="897.4" y="565" font-family="Liberation Sans, sans-serif" font-size="9.2" fill="#73777d" textLength="43.6" lengthAdjust="spacing" transform="rotate(-19.6 897.4 565)">Broadway</text>
<text x="1148.6" y="497.4" font-family="Liberation Sans, sans-serif" font-size="9.2" fill="#73777d" textLength="43.4" lengthAdjust="spacing" transform="rotate(-10 1148.6 497.4)" stroke="#f1f3f4" stroke-width="2.2" stroke-linejoin="round" stroke-opacity="0.85">Broadway</text>
<text x="1148.6" y="497.4" font-family="Liberation Sans, sans-serif" font-size="9.2" fill="#73777d" textLength="43.4" lengthAdjust="spacing" transform="rotate(-10 1148.6 497.4)">Broadway</text>
<text x="1212.4" y="421.6" font-family="Liberation Sans, sans-serif" font-size="9.2" fill="#73777d" textLength="32" lengthAdjust="spacing" transform="rotate(-9 1212.4 421.6)" stroke="#f1f3f4" stroke-width="2.2" stroke-linejoin="round" stroke-opacity="0.85">Walden</text>
<text x="1212.4" y="421.6" font-family="Liberation Sans, sans-serif" font-size="9.2" fill="#73777d" textLength="32" lengthAdjust="spacing" transform="rotate(-9 1212.4 421.6)">Walden</text>
<text x="1228.2" y="386.8" font-family="Liberation Sans, sans-serif" font-size="9" fill="#73777d" textLength="17" lengthAdjust="spacing" stroke="#f1f3f4" stroke-width="2.2" stroke-linejoin="round" stroke-opacity="0.85">at St</text>
<text x="1228.2" y="386.8" font-family="Liberation Sans, sans-serif" font-size="9" fill="#73777d" textLength="17" lengthAdjust="spacing">at St</text>
<text x="1225" y="399" font-family="Liberation Sans, sans-serif" font-size="10.2" fill="#62666c" textLength="26" lengthAdjust="spacing" stroke="#f1f3f4" stroke-width="2.2" stroke-linejoin="round" stroke-opacity="0.85">LLEF</text>
<text x="1225" y="399" font-family="Liberation Sans, sans-serif" font-size="10.2" fill="#62666c" textLength="26" lengthAdjust="spacing" stroke="#62666c" stroke-width="0.4">LLEF</text>
<text x="1226" y="585" font-family="Liberation Sans, sans-serif" font-size="9" fill="#73777d" textLength="23" lengthAdjust="spacing" stroke="#f1f3f4" stroke-width="2.2" stroke-linejoin="round" stroke-opacity="0.85">iam S</text>
<text x="1226" y="585" font-family="Liberation Sans, sans-serif" font-size="9" fill="#73777d" textLength="23" lengthAdjust="spacing">iam S</text>
<text x="1201" y="640.4" font-family="Liberation Sans, sans-serif" font-size="9" fill="#73777d" textLength="46" lengthAdjust="spacing" stroke="#f1f3f4" stroke-width="2.2" stroke-linejoin="round" stroke-opacity="0.85">Dingens St</text>
<text x="1201" y="640.4" font-family="Liberation Sans, sans-serif" font-size="9" fill="#73777d" textLength="46" lengthAdjust="spacing">Dingens St</text>
<text x="1052" y="355" font-family="Liberation Sans, sans-serif" font-size="9" fill="#73777d" textLength="9" lengthAdjust="spacing" transform="rotate(90 1052 355)" stroke="#f1f3f4" stroke-width="2.2" stroke-linejoin="round" stroke-opacity="0.85">Fil</text>
<text x="1052" y="355" font-family="Liberation Sans, sans-serif" font-size="9" fill="#73777d" textLength="9" lengthAdjust="spacing" transform="rotate(90 1052 355)">Fil</text>
<text x="1052.4" y="403.6" font-family="Liberation Sans, sans-serif" font-size="9" fill="#73777d" transform="rotate(90 1052.4 403.6)" stroke="#f1f3f4" stroke-width="2.2" stroke-linejoin="round" stroke-opacity="0.85">e</text>
<text x="1052.4" y="403.6" font-family="Liberation Sans, sans-serif" font-size="9" fill="#73777d" transform="rotate(90 1052.4 403.6)">e</text>
<text x="1091" y="341.6" font-family="Liberation Sans, sans-serif" font-size="9.4" fill="#73777d" textLength="121" lengthAdjust="spacing" stroke="#f1f3f4" stroke-width="2.2" stroke-linejoin="round" stroke-opacity="0.85">Dr. Martin Luther King</text>
<text x="1091" y="341.6" font-family="Liberation Sans, sans-serif" font-size="9.4" fill="#73777d" textLength="121" lengthAdjust="spacing">Dr. Martin Luther King</text>
<rect x="866.8000000000001" y="351.40000000000003" width="19.6" height="12.4" rx="6.2" fill="#fbfbfb" stroke="#6b6f74" stroke-width="1.2"/>
<text x="876.6" y="360.3" font-family="Liberation Sans, sans-serif" font-size="7.5" fill="#44484d" text-anchor="middle">384</text>
<rect x="882.5" y="578.3000000000001" width="20.6" height="12.6" rx="6.3" fill="#fbfbfb" stroke="#6b6f74" stroke-width="1.2"/>
<text x="892.8" y="587.3000000000001" font-family="Liberation Sans, sans-serif" font-size="7.5" fill="#44484d" text-anchor="middle">354</text>
<rect x="881.5" y="617.5" width="16.6" height="12.6" rx="6.3" fill="#fbfbfb" stroke="#6b6f74" stroke-width="1.2"/>
<text x="889.8" y="626.5" font-family="Liberation Sans, sans-serif" font-size="7.5" fill="#44484d" text-anchor="middle">16</text>
<rect x="1219.7" y="472.7" width="20.6" height="12.6" rx="6.3" fill="#fbfbfb" stroke="#6b6f74" stroke-width="1.2"/>
<text x="1230" y="481.7" font-family="Liberation Sans, sans-serif" font-size="7.5" fill="#44484d" text-anchor="middle">130</text>
<path d="M1194.2 432.2 Q1196 431 1197.6 431.4 Q1201.9 434 1206.2 431.4 Q1207.8 431 1209.6 432.2 Q1208.6 435 1210.6 438.6 Q1211.4 442.4 1207.6 444.4 Q1203.6 444.8 1201.9 446.2 Q1200.2 444.8 1196.2 444.4 Q1192.4 442.4 1193.2 438.6 Q1195.2 435 1194.2 432.2 Z" fill="#fbfbfb" stroke="#777b80" stroke-width="1.3"/>
<text x="1201.9" y="441.8" font-family="Liberation Sans, sans-serif" font-size="8" font-weight="700" fill="#62666b" text-anchor="middle">62</text>
<path d="M1023.4 392 a7.6 7.6 0 0 1 15.2 0 q0 5 -7.6 19 q-7.6 -14 -7.6 -19 Z" fill="#3f93ae"/>
<path d="M1221 339 h12.8 l-6.4 11.6 Z" fill="#7d8793"/>
<rect x="848" y="624.4" width="12.2" height="12" rx="2" fill="#4a80e8"/><rect x="851" y="627.4" width="6.2" height="6" rx="1" fill="none" stroke="#fff" stroke-width="1.1"/>
<path d="M760 528.6 h6 v6.6 q-2 3.4 -6 4.4 Z" fill="#4a78c8"/><rect x="760" y="528.6" width="6" height="2.2" fill="#c5443c"/></g></g><defs><filter id="lb"><feGaussianBlur stdDeviation="0.3"/></filter></defs></svg>
<div class="abs" style="left:968px;top:364px;width:65.6px;height:35px;background:#fff;border-radius:2.5px;box-shadow:0 1px 3px rgba(0,0,0,0.3)"></div>
<div class="abs" style="left:1050px;top:364px;width:124px;height:35px;background:#fff;border-radius:2.5px;box-shadow:0 1px 3px rgba(0,0,0,0.3)"></div>
<div class="abs" style="left:1189.6px;top:364px;width:35.4px;height:35px;background:#fff;border-radius:2.5px;box-shadow:0 1px 3px rgba(0,0,0,0.3)"></div>
<div class="abs" style="left:1190px;top:541px;width:35px;height:71px;background:#fff;border-radius:2.5px;box-shadow:0 1px 3px rgba(0,0,0,0.3)"></div>
<div class="abs" style="left:1193px;top:576px;width:29px;height:1px;background:#e9e9e9"></div>
<div class="abs" style="left:1100px;top:371.6px;width:1px;height:19.8px;background:#111"></div>
<span class="t" style="left:980.38px;top:374.00px;font-size:14.2px;line-height:14.2px;color:#3a3a3a;letter-spacing:0.441px;">Traffic</span>
<span class="t" style="left:1061.85px;top:374.00px;font-size:14.2px;line-height:14.2px;color:#161616;font-weight:700;letter-spacing:0.666px;">Map</span>
<span class="t" style="left:1108.36px;top:374.00px;font-size:14.2px;line-height:14.2px;color:#444;letter-spacing:0.345px;">Satellite</span>
<svg style="left:0;top:0" width="1277" height="799"><path d="M1199.4 379 V374.6 H1203.8 M1210.4 374.6 H1214.8 V379 M1214.8 384.4 V388.8 H1210.4 M1203.8 388.8 H1199.4 V384.4" fill="none" stroke="#707070" stroke-width="1.5"/><path d="M1199.6 559.2 H1214.8 M1207.2 551.6 V566.8 M1199.6 594.6 H1214.8" fill="none" stroke="#666" stroke-width="1.4"/></svg>

</div>
</body></html>
